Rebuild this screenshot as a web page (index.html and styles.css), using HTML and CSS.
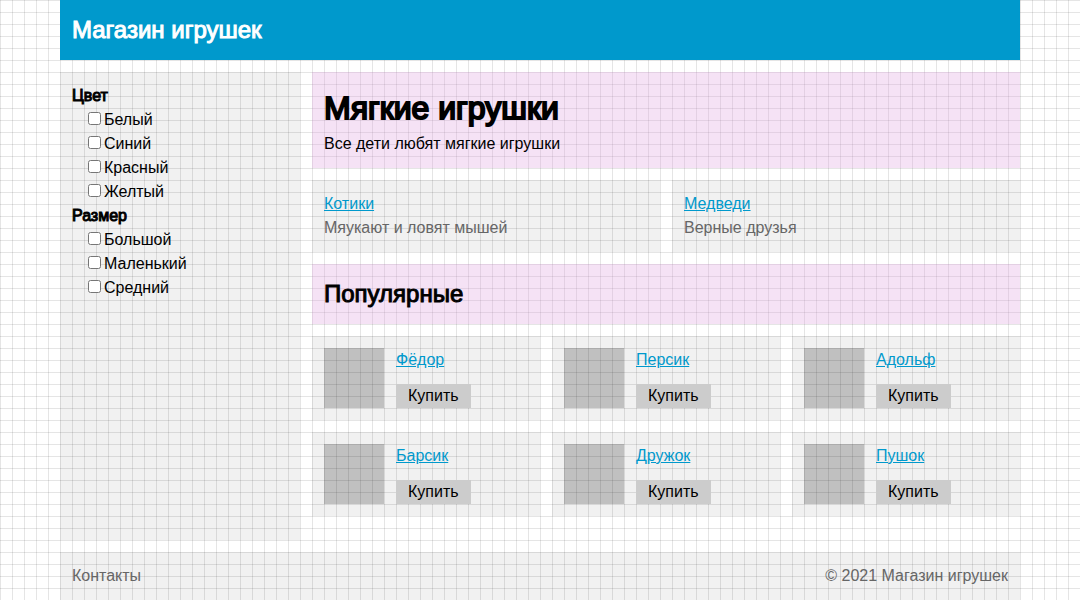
FILE: index.html
```html
<!DOCTYPE html>
<html lang="ru">
<head>
<meta charset="utf-8">
<meta name="viewport" content="width=device-width, initial-scale=1">
<title>Магазин игрушек</title>
<link rel="stylesheet" href="styles.css">
</head>
<body>
<div class="page">
  <header class="header"><span class="site-name">Магазин игрушек</span></header>
  <div class="content">
    <aside class="filters panel">
      <fieldset class="filter">
        <legend class="filter-title">Цвет</legend>
        <ul class="options">
          <li><label><input type="checkbox">Белый</label></li>
          <li><label><input type="checkbox">Синий</label></li>
          <li><label><input type="checkbox">Красный</label></li>
          <li><label><input type="checkbox">Желтый</label></li>
        </ul>
      </fieldset>
      <fieldset class="filter">
        <legend class="filter-title">Размер</legend>
        <ul class="options">
          <li><label><input type="checkbox">Большой</label></li>
          <li><label><input type="checkbox">Маленький</label></li>
          <li><label><input type="checkbox">Средний</label></li>
        </ul>
      </fieldset>
    </aside>
    <main class="main">
      <section class="intro accent">
        <h1 class="title">Мягкие игрушки</h1>
        <p>Все дети любят мягкие игрушки</p>
      </section>
      <section class="categories">
        <article class="panel category">
          <a class="link" href="#cats">Котики</a>
          <p class="muted">Мяукают и ловят мышей</p>
        </article>
        <article class="panel category">
          <a class="link" href="#bears">Медведи</a>
          <p class="muted">Верные друзья</p>
        </article>
      </section>
      <div class="accent"><h2 class="subtitle">Популярные</h2></div>
      <section class="products">
        <article class="panel product">
          <div class="photo"></div>
          <div class="info"><a class="link" href="#fedor">Фёдор</a><button class="buy" type="button">Купить</button></div>
        </article>
        <article class="panel product">
          <div class="photo"></div>
          <div class="info"><a class="link" href="#persik">Персик</a><button class="buy" type="button">Купить</button></div>
        </article>
        <article class="panel product">
          <div class="photo"></div>
          <div class="info"><a class="link" href="#adolf">Адольф</a><button class="buy" type="button">Купить</button></div>
        </article>
        <article class="panel product">
          <div class="photo"></div>
          <div class="info"><a class="link" href="#barsik">Барсик</a><button class="buy" type="button">Купить</button></div>
        </article>
        <article class="panel product">
          <div class="photo"></div>
          <div class="info"><a class="link" href="#druzhok">Дружок</a><button class="buy" type="button">Купить</button></div>
        </article>
        <article class="panel product">
          <div class="photo"></div>
          <div class="info"><a class="link" href="#pushok">Пушок</a><button class="buy" type="button">Купить</button></div>
        </article>
      </section>
    </main>
  </div>
  <footer class="footer panel muted">
    <span>Контакты</span>
    <span>© 2021 Магазин игрушек</span>
  </footer>
</div>
</body>
</html>
```

FILE: styles.css
```css
* {
  box-sizing: border-box;
}

body {
  margin: 0;
  font: 16px/24px "Liberation Sans", Arial, sans-serif;
  color: #000;
  background-color: #fff;
  background-image:
    linear-gradient(rgba(0, 0, 0, 0.1) 1px, transparent 1px),
    linear-gradient(90deg, rgba(0, 0, 0, 0.1) 1px, transparent 1px);
  background-size: 12px 12px;
}

p,
h1,
h2,
ul,
fieldset {
  margin: 0;
  padding: 0;
}

.page {
  display: flex;
  flex-direction: column;
  gap: 12px;
  max-width: 960px;
  min-height: 100vh;
  margin: 0 auto;
}

.header {
  padding: 12px;
  color: #fff;
  background: #09c;
}

.site-name,
.title,
.subtitle,
.filter-title {
  font-weight: 400;
  -webkit-text-stroke: 1px currentColor;
}

.site-name,
.subtitle {
  display: block;
  font-size: 24px;
  line-height: 36px;
}

.title {
  font-size: 32px;
  line-height: 48px;
  -webkit-text-stroke-width: 2px;
}

.panel {
  padding: 12px;
  background: rgba(0, 0, 0, 0.055);
}

.accent {
  padding: 12px;
  background: rgba(221, 160, 221, 0.3);
}

.content {
  display: grid;
  grid-template-columns: 240px 1fr;
  gap: 12px;
  flex: 1;
}

.filter {
  border: 0;
  min-width: 0;
}

.filter-title {
  display: block;
  padding: 0;
}

.options {
  padding-left: 12px;
  list-style: none;
}

.main {
  display: flex;
  flex-direction: column;
  gap: 12px;
}

.categories {
  display: grid;
  grid-template-columns: repeat(2, 1fr);
  gap: 12px;
}

.products {
  display: grid;
  grid-template-columns: repeat(3, 1fr);
  gap: 12px;
}

.product {
  display: flex;
  gap: 12px;
}

.photo {
  width: 60px;
  height: 60px;
  background: rgba(0, 0, 0, 0.2);
}

.info {
  display: flex;
  flex-direction: column;
  align-items: flex-start;
  justify-content: space-between;
}

.link {
  color: #09c;
}

.muted {
  color: #666;
}

.buy {
  padding: 0 12px;
  border: 0;
  font: inherit;
  color: #000;
  background: #ccc;
  cursor: pointer;
}

.footer {
  display: flex;
  justify-content: space-between;
}
```
